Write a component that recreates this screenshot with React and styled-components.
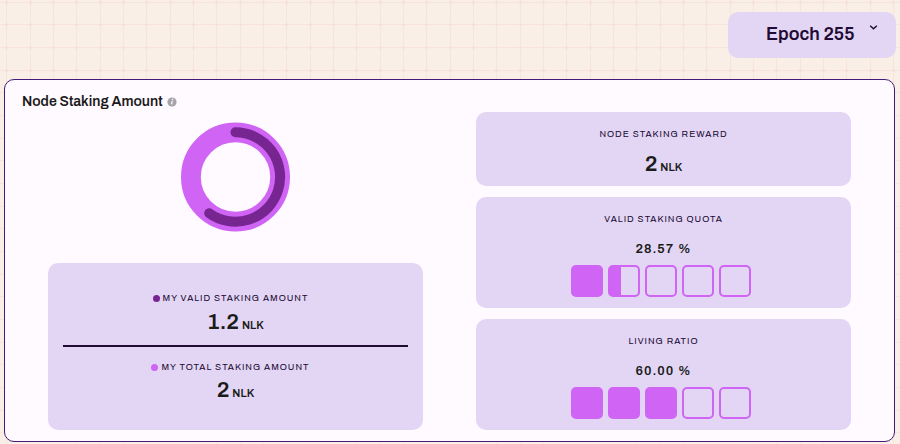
import React from "react";
import styled, { createGlobalStyle } from "styled-components";

const color = {
  page: "#f9efe7",
  panel: "#fffaff",
  card: "#e3d6f5",
  border: "#431c7a",
  ink: "#1b1b1b",
  deep: "#210a33",
  bright: "#cf64f5",
  dark: "#772591",
};

const columns = [6, 30, 53];
const rows = [2, 24, 47];
const gridTile = `<svg xmlns="http://www.w3.org/2000/svg" width="70" height="68"><g fill="#f7e4db">${columns
  .map((x) => `<rect x="${x}" y="0" width="1" height="68"/>`)
  .join("")}${rows
  .map((y) => `<rect x="0" y="${y}" width="70" height="1"/>`)
  .join("")}</g><g fill="#f6dfd6">${columns
  .flatMap((x) => rows.map((y) => `<circle cx="${x + 0.5}" cy="${y + 0.5}" r="1.5"/>`))
  .join("")}</g></svg>`;

const GlobalStyle = createGlobalStyle`
  * { box-sizing: border-box; }
  body {
    margin: 0;
    background: ${color.page} url("data:image/svg+xml,${encodeURIComponent(gridTile)}");
    color: ${color.ink};
    font-family: "Archivo", "Liberation Sans", Arial, sans-serif;
  }
`;

const Page = styled.main`
  display: flex;
  flex-direction: column;
  gap: 21px;
  padding: 12px 4px 2px;
`;

const Toolbar = styled.header`
  display: flex;
  justify-content: flex-end;
`;

const SelectBox = styled.div`
  position: relative;
  width: 168px;
`;

const EpochSelect = styled.select`
  appearance: none;
  display: block;
  width: 100%;
  height: 46px;
  padding: 0 32px 2px 38px;
  border: 0;
  border-radius: 10px;
  background: ${color.card};
  color: ${color.deep};
  font: 600 18px/22px "Archivo", "Liberation Sans", Arial, sans-serif;
  cursor: pointer;
`;

const Chevron = styled.svg`
  position: absolute;
  top: 12px;
  right: 18px;
  width: 9px;
  height: 7px;
  pointer-events: none;
`;

const Panel = styled.section`
  margin-right: 1px;
  padding: 11px 0;
  border: 1px solid ${color.border};
  border-radius: 10px;
  background: ${color.panel};
`;

const TitleRow = styled.div`
  display: flex;
  align-items: center;
  gap: 4px;
  padding-left: 17px;
`;

const Title = styled.h1`
  margin: 0;
  font-size: 14px;
  line-height: 21px;
  font-weight: 600;
`;

const InfoButton = styled.button`
  display: flex;
  padding: 0;
  border: 0;
  background: none;
`;

const Columns = styled.div`
  display: grid;
  grid-template-columns: 1fr 1fr;
  gap: 53px;
  padding: 0 43px;
`;

const Column = styled.div`
  display: flex;
  flex-direction: column;
  gap: ${(p) => p.$gap}px;
  padding-top: ${(p) => p.$top || 0}px;
`;

const Donut = styled.svg`
  align-self: center;
  width: 109px;
  height: 110px;
`;

const Card = styled.article`
  display: flex;
  flex-direction: column;
  align-items: center;
  padding: ${(p) => p.$pad};
  border-radius: 10px;
  background: ${color.card};
`;

const Label = styled.h2`
  display: flex;
  align-items: center;
  gap: 3px;
  margin: 0;
  color: ${color.deep};
  font-size: 9px;
  line-height: 12px;
  font-weight: normal;
  letter-spacing: 1px;
`;

const Dot = styled.span`
  width: 7px;
  height: 7px;
  margin-left: -10px;
  border-radius: 50%;
  background: ${(p) => p.$color};
`;

const Amount = styled.p`
  margin: ${(p) => p.$gap}px 0 0;
  font-size: 22px;
  line-height: 28px;
  font-weight: 600;
`;

const Unit = styled.span`
  margin-left: 3px;
  font-size: 11px;
  line-height: 1;
`;

const Divider = styled.hr`
  align-self: stretch;
  height: 2px;
  margin: 9px 0 14px;
  border: 0;
  background: ${color.deep};
`;

const Percent = styled.p`
  margin: 15px 0 7px;
  font-size: 13px;
  line-height: 18px;
  font-weight: 600;
  letter-spacing: 1px;
`;

const Boxes = styled.div`
  display: flex;
  gap: 5px;
  padding-right: 6px;
`;

const Box = styled.span`
  width: 32px;
  height: 32px;
  border: 2px solid ${color.bright};
  border-radius: 5px;
  background: ${(p) => (p.$full ? color.bright : "transparent")};
`;

const Fill = styled.span`
  display: block;
  height: 100%;
  background: ${color.bright};
`;

function Meter({ label, value }) {
  const filled = value / 20;
  return (
    <Card $pad="16px 15px 11px">
      <Label>{label}</Label>
      <Percent>{value.toFixed(2)} %</Percent>
      <Boxes>
        {[0, 1, 2, 3, 4].map((i) => {
          const share = Math.max(0, Math.min(1, filled - i));
          return (
            <Box key={i} $full={share === 1}>
              <Fill style={{ width: `${share * 100}%` }} />
            </Box>
          );
        })}
      </Boxes>
    </Card>
  );
}

function Tokens({ value, gap }) {
  return (
    <Amount $gap={gap}>
      {value}
      <Unit>NLK</Unit>
    </Amount>
  );
}

export default function App() {
  return (
    <>
      <GlobalStyle />
      <Page>
        <Toolbar>
          <SelectBox>
            <EpochSelect aria-label="Epoch" defaultValue="255">
              <option value="255">Epoch 255</option>
            </EpochSelect>
            <Chevron viewBox="0 0 9 7" aria-hidden="true">
              <path d="M1.2 1.7 4.5 4.8 7.8 1.7" fill="none" stroke={color.deep} strokeWidth="1.4" />
            </Chevron>
          </SelectBox>
        </Toolbar>
        <Panel>
          <TitleRow>
            <Title>Node Staking Amount</Title>
            <InfoButton type="button" aria-label="About node staking">
              <svg width="10" height="10" viewBox="0 0 10 10" aria-hidden="true">
                <circle cx="5" cy="5" r="4.6" fill="#a6a4a8" />
                <path d="M5.2 4.2 4.6 7.4" stroke={color.panel} strokeWidth="1.3" />
                <circle cx="5.6" cy="2.6" r="0.8" fill={color.panel} />
              </svg>
            </InfoButton>
          </TitleRow>
          <Columns>
            <Column $gap={31} $top={10}>
              <Donut viewBox="0 0 109 110" role="img" aria-label="Valid share of total staking amount">
                <circle cx="54.5" cy="55" r="44.6" fill="none" stroke={color.bright} strokeWidth="19.8" />
                <path
                  d="M54.5 10.3 A44.7 44.7 0 1 1 28.2 91.2"
                  fill="none"
                  stroke={color.dark}
                  strokeWidth="10"
                  strokeLinecap="round"
                />
              </Donut>
              <Card $pad="29px 15px 26px">
                <Label>
                  <Dot $color={color.dark} />
                  MY VALID STAKING AMOUNT
                </Label>
                <Tokens value="1.2" gap={4} />
                <Divider />
                <Label>
                  <Dot $color={color.bright} />
                  MY TOTAL STAKING AMOUNT
                </Label>
                <Tokens value="2" gap={3} />
              </Card>
            </Column>
            <Column $gap={11}>
              <Card $pad="16px 15px 8px">
                <Label>NODE STAKING REWARD</Label>
                <Tokens value="2" gap={10} />
              </Card>
              <Meter label="VALID STAKING QUOTA" value={28.57} />
              <Meter label="LIVING RATIO" value={60} />
            </Column>
          </Columns>
        </Panel>
      </Page>
    </>
  );
}
